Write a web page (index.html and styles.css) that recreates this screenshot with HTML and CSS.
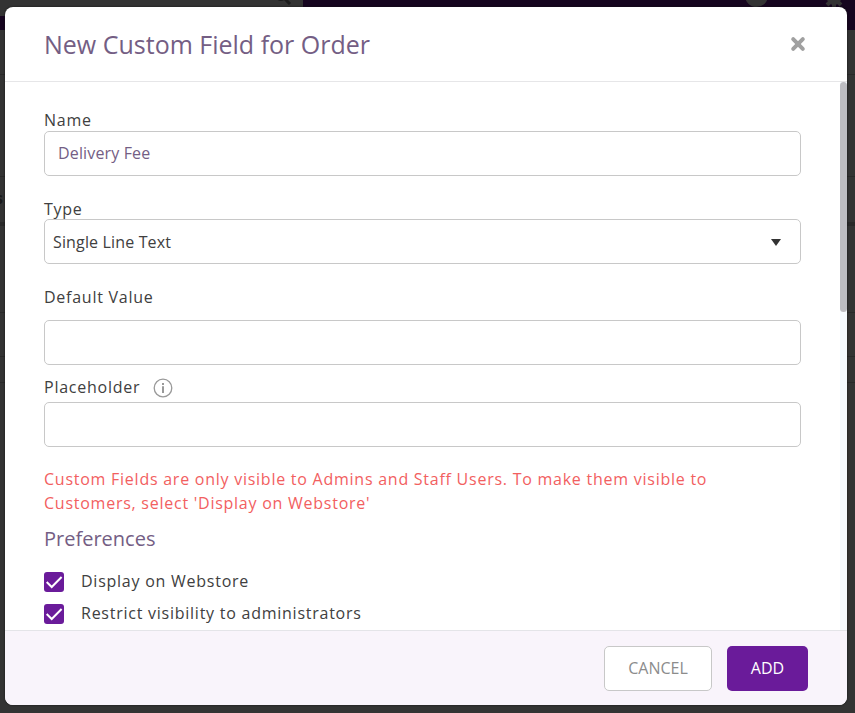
FILE: index.html
```html
<!DOCTYPE html>
<html lang="en">
<head>
<meta charset="utf-8">
<title>New Custom Field for Order</title>
<link rel="stylesheet" href="styles.css">
</head>
<body>
<div class="page">
  <div class="topbar">
    <div class="search"><svg width="16" height="16" viewBox="0 0 16 16" fill="none" stroke="#1b1b1b"><circle cx="6" cy="6" r="5" stroke-width="2"/><path d="M10 10l5 5" stroke-width="3"/></svg></div>
    <span class="avatar"></span>
    <svg class="gear" width="22" height="22" viewBox="0 0 22 22"><circle cx="11" cy="11" r="7" fill="#333"/><path d="M11 1v20M1 11h20M4 4l14 14M18 4L4 18" stroke="#333" stroke-width="4"/></svg>
  </div>
  <div class="strip strip-a"></div>
  <div class="strip strip-b"></div>
  <div class="strip strip-row">s</div>
  <div class="strip strip-c"></div>
  <div class="strip strip-d"></div>
  <div class="strip strip-e"></div>
</div>
<div class="modal" role="dialog">
  <header class="head">
    <h1>New Custom Field for Order</h1>
    <svg class="close" width="16" height="16" viewBox="0 0 16 16"><path d="M3.2 3.2l9.6 9.6M12.8 3.2L3.2 12.8" stroke="#a0a0a0" stroke-width="4" stroke-linecap="round"/></svg>
  </header>
  <div class="body">
    <form class="form">
      <div class="label">Name</div>
      <div class="field name">Delivery Fee</div>
      <div class="label type">Type</div>
      <div class="field select"><span>Single Line Text</span><svg width="10" height="7" viewBox="0 0 10 7"><path d="M0 0h10L5 7z" fill="#333"/></svg></div>
      <div class="label default">Default Value</div>
      <div class="field default-field"></div>
      <div class="label placeholder">Placeholder<svg class="info" width="20" height="20" viewBox="0 0 20 20"><circle cx="10" cy="10" r="8.8" fill="none" stroke="#999" stroke-width="1.3"/><path d="M10 8.2V15M10 5v2" stroke="#999" stroke-width="2"/></svg></div>
      <div class="field placeholder-field"></div>
      <p class="note">Custom Fields are only visible to Admins and Staff Users. To make them visible to Customers, select 'Display on Webstore'</p>
      <h2>Preferences</h2>
      <div class="check"><svg width="20" height="20" viewBox="0 0 20 20"><rect width="20" height="20" rx="3" fill="#6a1b9a"/><path d="M2.7 10l5 5L17.6 5" fill="none" stroke="#fff" stroke-width="2"/></svg><span>Display on Webstore</span></div>
      <div class="check"><svg width="20" height="20" viewBox="0 0 20 20"><rect width="20" height="20" rx="3" fill="#6a1b9a"/><path d="M2.7 10l5 5L17.6 5" fill="none" stroke="#fff" stroke-width="2"/></svg><span>Restrict visibility to administrators</span></div>
    </form>
    <div class="track"><div class="thumb"></div></div>
  </div>
  <footer class="foot">
    <div class="btn cancel">CANCEL</div>
    <div class="btn add">ADD</div>
  </footer>
</div>
</body>
</html>
```
FILE: styles.css
```css
* { box-sizing: border-box; }
body {
  margin: 0;
  width: 855px;
  height: 713px;
  overflow: hidden;
  position: relative;
  background: #333;
  font-family: "Open Sans", sans-serif;
  font-size: 16px;
  color: #404040;
}
.page { display: flex; flex-direction: column; height: 713px; }
.topbar { position: relative; height: 30px; background: #16051f; flex: none; }
.search { width: 303px; height: 16px; background: #333; }
.search svg { position: absolute; left: 275px; top: -11px; }
.avatar { position: absolute; left: 745px; top: -16px; width: 23px; height: 23px; border-radius: 50%; background: #333; }
.gear { position: absolute; left: 823px; top: -13px; }
.strip { flex: none; border-bottom: 1px solid #292929; }
.strip-a { height: 45px; }
.strip-b { height: 102px; }
.strip-row { height: 49px; border-bottom: 4px solid #292929; line-height: 43px; font-weight: 700; color: #191919; text-indent: -5px; }
.strip-c { height: 87px; }
.strip-d { height: 44px; }
.strip-e { height: 26px; }
.modal {
  position: absolute;
  left: 5px;
  top: 7px;
  width: 842px;
  height: 698px;
  display: flex;
  flex-direction: column;
  background: #fff;
  border-radius: 8px;
  overflow: hidden;
  box-shadow: 0 0 2px #111;
}
.head {
  height: 75px;
  flex: none;
  display: flex;
  justify-content: space-between;
  align-items: center;
  padding: 0 41px 0 39px;
  border-bottom: 1px solid #e6e6e8;
}
h1 { margin: 0; font-size: 25px; line-height: 34px; font-weight: 400; color: #745e84; }
.body { flex: 1; min-height: 0; display: flex; justify-content: space-between; overflow: hidden; }
.form { width: 796px; padding: 27px 0 0 39px; }
.label { height: 22px; line-height: 22px; letter-spacing: .75px; }
.field { height: 45px; border: 1px solid #c8c8c8; border-radius: 5px; display: flex; align-items: center; }
.name { padding: 0 0 2px 13px; letter-spacing: .15px; color: #745e84; }
.type { margin-top: 22px; height: 21px; }
.select { position: relative; background: #fff; justify-content: space-between; padding: 0 19px 0 8px; letter-spacing: .15px; }
.select svg { margin-top: 1px; }
.default { margin-top: 22px; }
.default-field { margin-top: 12px; }
.placeholder { margin-top: 11px; height: 26px; display: flex; }
.info { margin: 2px 0 0 13px; }
.note { margin: 20px 0 0; padding-right: 30px; line-height: 24px; letter-spacing: .75px; color: #f2605f; }
h2 { margin: 10px 0 0; font-size: 20px; line-height: 28px; font-weight: 400; color: #745e84; }
.check { height: 20px; margin-top: 12px; display: flex; line-height: 18px; letter-spacing: .75px; }
h2 + .check { margin-top: 19px; }
.check svg { flex: none; margin-right: 17px; }
.track { width: 7px; background: #f5fafe; }
.thumb { height: 230px; border-radius: 4px; background: #bdbdc2; }
.foot {
  height: 75px;
  flex: none;
  display: flex;
  gap: 15px;
  justify-content: flex-end;
  padding: 15px 39px 0 0;
  border-top: 1px solid #e4e4e8;
  background: #f9f4fb;
}
.btn { height: 45px; border-radius: 5px; display: flex; align-items: center; justify-content: center; padding-bottom: 2px; }
.cancel { width: 108px; border: 1px solid #c8c8c8; background: #fff; color: #8c8c8c; }
.add { width: 81px; background: #6a1b9a; color: #fff; }
```
